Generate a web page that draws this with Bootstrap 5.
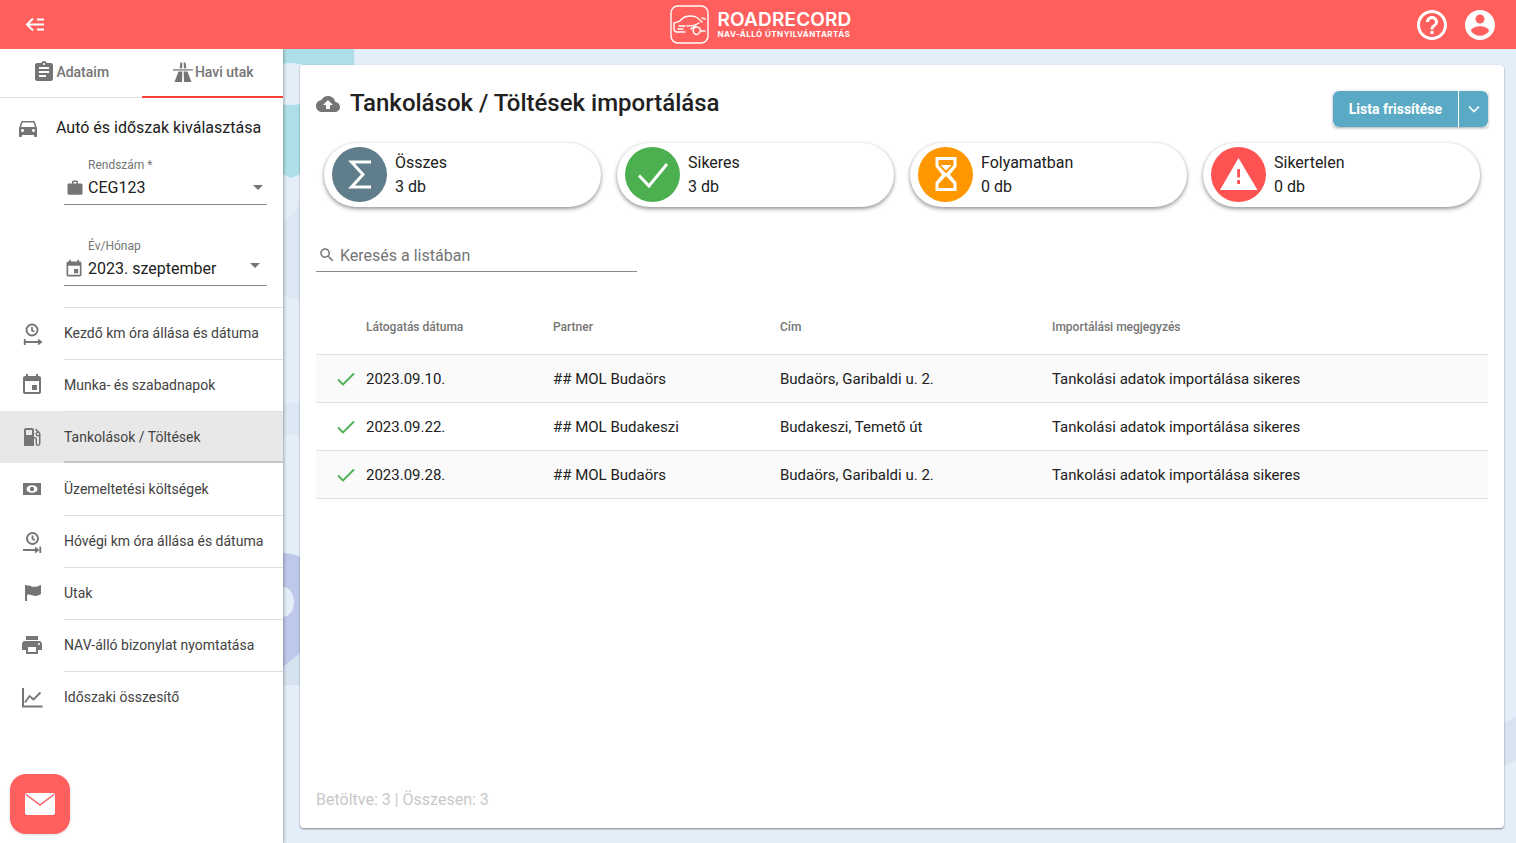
<!DOCTYPE html>
<html lang="hu">
<head>
<meta charset="utf-8">
<title>RoadRecord</title>
<link href="https://cdn.jsdelivr.net/npm/bootstrap@5.3.0/dist/css/bootstrap.min.css" rel="stylesheet">
<style>
html,body{height:100%}
body{font-family:Roboto,"Liberation Sans",sans-serif;font-size:14px;color:#212121;background:#e3eef9;overflow:hidden}
.rr-shell{height:843px}
.rr-top{height:49px;background:#ff5f5d;color:#fff;flex:none;position:relative;z-index:3}
.rr-back{left:24px;top:14px;width:21px;height:21px}
.rr-logo{gap:8px;height:49px;margin-left:4px}
.rr-brand{font-family:"Inter","Noto Sans",sans-serif;font-weight:600;font-size:19px;line-height:19px;letter-spacing:.15px}
.rr-sub{font-family:"Inter","Noto Sans",sans-serif;font-weight:700;font-size:8px;line-height:10px;letter-spacing:.46px}
.rr-top-icons{right:18px;top:0;height:49px;gap:12px}
.rr-top-icons svg{width:36px;height:36px;fill:#fff}
.rr-body{min-height:0;position:relative}
.rr-side{width:283px;flex:none;background:#fff;box-shadow:1px 0 3px rgba(0,0,0,.3);position:relative;z-index:2}
.rr-tabs{height:49px;border-bottom:1px solid #e0e0e0;flex:none}
.rr-tab{flex:1 1 50%;height:48px;color:#757575;font-weight:500;font-size:14px;gap:0;padding-bottom:2px}
.rr-tab svg{width:24px;height:24px;fill:#757575;flex:none}
.rr-tab-on{border-bottom:2px solid #f44336;height:49px;margin-bottom:-1px;padding-bottom:1px}
.rr-sec{height:60px;padding-left:16px;font-size:16px;gap:16px}
.rr-sec svg{width:24px;height:24px;fill:#757575;flex:none}
.rr-field{margin-left:64px;width:203px;border-bottom:1px solid #8a8a8a;position:relative}
.rr-f1{height:50px;margin-top:-3px;padding-top:3px}
.rr-f2{height:50px;margin-top:31px;padding-top:3px}
.rr-flabel{font-size:12px;line-height:14px;color:#757575;padding-left:24px;margin-bottom:4px}
.rr-fval{font-size:16px;line-height:24px;color:#212121;gap:4px}
.rr-fval svg{width:20px;height:20px;fill:#757575;flex:none}
.rr-f1 .rr-fval svg{width:18px;height:18px;margin-left:2px}
.rr-caret{width:0;height:0;border-left:5.5px solid transparent;border-right:5.5px solid transparent;border-top:5px solid #757575;right:4px;top:30px}
.rr-f2 .rr-caret{right:7px;top:27px}
.rr-nav{margin-top:21px}
.rr-item{height:52px;position:relative;color:#424242;font-size:14px}
.rr-ic{width:64px;flex:none}
.rr-ic svg{width:24px;height:24px;fill:#757575}
.rr-lab{flex:1;height:52px;border-top:1px solid #e0e0e0}
.rr-active{background:#e8e8e8}
.rr-active .rr-lab{border-bottom:2px solid #c4c4c4;padding-top:2px}
.rr-active + .rr-item .rr-lab{border-top:0;padding-top:1px}
.rr-fab{width:60px;height:60px;border-radius:16px;background:#ff5f5d;margin:auto 0 9px 10px;box-shadow:0 1px 3px rgba(0,0,0,.15)}
.rr-fab svg{width:30px;height:22px}
.rr-main{position:relative;padding:16px 12px 15px 17px;min-width:0}
.rr-deco{position:absolute;left:0;top:0;width:1233px;height:794px;z-index:0}
.rr-card{position:relative;z-index:1;background:#fff;border-radius:4px;box-shadow:0 1px 2px rgba(0,0,0,.45);padding:0 16px 16px}
.rr-head{height:78px;flex:none}
.rr-head-ic{width:24px;height:24px;fill:#757575;margin-right:10px}
.rr-title{font-size:24px;font-weight:500;color:#212121;margin:0;line-height:28px;position:relative;top:-1px}
.rr-group{height:36px;border-radius:4px;box-shadow:0 1px 3px rgba(0,0,0,.35);margin-top:10px}
.rr-btn{background:#5aa9c5;color:#fff;font-size:14px;font-weight:700;border:0;height:36px;padding:0 16px;--bs-btn-hover-bg:#5aa9c5;--bs-btn-hover-color:#fff}
.rr-btn-r{flex:0 0 29px;width:29px;padding:0;margin-left:1px !important}
.rr-btn-r svg{width:12px;height:8px}
.rr-pills{padding:0 8px;gap:16px;flex:none}
.rr-pill{flex:1 1 0;height:64px;border-radius:32px;background:#fff;box-shadow:0 2px 4px rgba(0,0,0,.4),0 0 3px rgba(0,0,0,.08);padding:0 8px;gap:8px;min-width:0}
.rr-disc{width:55px;height:55px;border-radius:50%;flex:none;margin-top:-1px}
.rr-disc svg{width:55px;height:55px;display:block}
.rr-ptext{font-size:16px;line-height:24px;color:#212121;margin-top:-1px}
.rr-slate{background:#607d8b}.rr-green{background:#4caf50}.rr-amber{background:#ff9800}.rr-red{background:#ff5252}
.rr-search{width:321px;height:37px;margin-top:28px;padding-top:6px;border-bottom:1px solid #8a8a8a;color:#757575;font-size:16px;flex:none}
.rr-search svg{width:18px;height:18px;fill:#757575;margin:0 4px 0 2px;position:relative;top:-1px}
.rr-table{table-layout:fixed;margin:34px 0 0;--bs-table-bg:transparent;color:#212121}
.rr-table th{font-size:12px;font-weight:500;color:#757575;height:48px;padding:0 0 6px;vertical-align:middle;border-bottom:1px solid #e0e0e0}
.rr-table td{font-size:15px;height:48px;padding:2px 0 0;vertical-align:middle;border-bottom:1px solid #e0e0e0;color:#212121;background:transparent;box-shadow:none}
.rr-table tr.rr-odd td{background:#fafafa}
.rr-c0{width:50px}.rr-c1{width:187px}.rr-c2{width:227px}.rr-c3{width:272px}
.rr-chk{width:18px;height:14px;margin-left:21px;display:block}
.rr-foot{margin-top:auto;font-size:16px;line-height:24px;color:#c8c8c8}
</style>
</head>
<body>
<div class="rr-shell d-flex flex-column">
  <header class="rr-top d-flex align-items-center justify-content-center">
    <svg class="rr-back position-absolute" viewBox="0 0 21 21" fill="none" stroke="#fff" stroke-width="2"><path d="M9 4.500 3 10.500l6 6M3 10.500h17M13 5.500h7M13 15.500h7"/></svg>
    <div class="rr-logo d-flex align-items-center">
      <svg width="41" height="41" viewBox="0 0 41 41" fill="none" stroke="#fff" stroke-width="1.400" stroke-linecap="round" stroke-linejoin="round"><path d="M9 2h23c4 0 7 3 7 7v23c0 4-3 7-7 7H9c-4 0-7-3-7-7V9c0-4 3-7 7-7z"/><path d="M5 19c3-1 5-1 7-3 2-3 5-4 10-4 5 0 7 2 11 6M33 14l3 1M5 19v6c0 2 1 3 3 3h8M10 22h6M9 25h5M18 22c5 0 9-1 12-3"/><path d="M26 30c-3-2-2-7 1-7 4 0 5 2 4 5-1 2-3 3-5 2zM22 25c3-3 4-3 5-3M32 27h4"/></svg>
      <div class="text-start">
        <div class="rr-brand">ROADRECORD</div>
        <div class="rr-sub">NAV-ÁLLÓ ÚTNYILVÁNTARTÁS</div>
      </div>
    </div>
    <div class="rr-top-icons position-absolute d-flex align-items-center">
      <svg viewBox="0 0 24 24"><path d="M11 18h2v-2h-2v2zm1-16C6.480 2 2 6.480 2 12s4.480 10 10 10 10-4.480 10-10S17.520 2 12 2zm0 18c-4.410 0-8-3.590-8-8s3.590-8 8-8 8 3.590 8 8-3.590 8-8 8zm0-14c-2.210 0-4 1.790-4 4h2c0-1.100.9-2 2-2s2 .9 2 2c0 2-3 1.750-3 5h2c0-2.250 3-2.500 3-5 0-2.210-1.790-4-4-4z"/></svg>
      <svg viewBox="0 0 24 24"><path d="M12 2C6.480 2 2 6.480 2 12s4.480 10 10 10 10-4.480 10-10S17.520 2 12 2zm0 3c1.660 0 3 1.340 3 3s-1.340 3-3 3-3-1.340-3-3 1.340-3 3-3zm0 14.200c-2.500 0-4.710-1.280-6-3.220.03-1.990 4-3.080 6-3.080 1.990 0 5.970 1.090 6 3.080-1.290 1.940-3.500 3.220-6 3.220z"/></svg>
    </div>
  </header>

  <div class="rr-body d-flex flex-grow-1">
    <aside class="rr-side d-flex flex-column">
      <div class="rr-tabs d-flex">
        <div class="rr-tab d-flex align-items-center justify-content-center">
          <svg viewBox="0 0 24 24"><path d="M19 3h-4.180C14.400 1.840 13.300 1 12 1c-1.300 0-2.400.84-2.820 2H5c-1.100 0-2 .9-2 2v14c0 1.100.9 2 2 2h14c1.100 0 2-.9 2-2V5c0-1.100-.9-2-2-2zm-7 0c.55 0 1 .45 1 1s-.45 1-1 1-1-.45-1-1 .45-1 1-1zm2 14H7v-2h7v2zm3-4H7v-2h10v2zm0-4H7V7h10v2z"/></svg>
          <span>Adataim</span>
        </div>
        <div class="rr-tab rr-tab-on d-flex align-items-center justify-content-center">
          <svg viewBox="0 0 24 24"><path d="M2 9.200h20v1.300H2zM9.500 2.500h1.800l-.2 5.800H8.600zM12.700 2.500h1.800l.9 5.800h-2.500zM7.500 11.500h3.800L11 22H3.500zM12.700 11.500h3.800l4 10.500H13z"/></svg>
          <span>Havi utak</span>
        </div>
      </div>
      <div class="rr-sec d-flex align-items-center">
        <svg viewBox="0 0 24 24"><path d="M18.920 6.010C18.720 5.420 18.160 5 17.500 5h-11c-.66 0-1.210.42-1.420 1.010L3 12v8c0 .55.45 1 1 1h1c.55 0 1-.45 1-1v-1h12v1c0 .55.45 1 1 1h1c.55 0 1-.45 1-1v-8l-2.080-5.990zM6.500 16c-.83 0-1.500-.67-1.500-1.500S5.670 13 6.500 13s1.500.67 1.500 1.500S7.330 16 6.500 16zm11 0c-.83 0-1.500-.67-1.500-1.500s.67-1.500 1.500-1.500 1.500.67 1.500 1.500-.67 1.500-1.500 1.500zM5 11l1.500-4.500h11L19 11H5z"/></svg>
        <span>Autó és időszak kiválasztása</span>
      </div>
      <div class="rr-field rr-f1">
        <div class="rr-flabel">Rendszám *</div>
        <div class="rr-fval d-flex align-items-center">
          <svg viewBox="0 0 24 24"><path d="M20 6h-4V4c0-1.110-.89-2-2-2h-4c-1.110 0-2 .89-2 2v2H4c-1.110 0-1.990.89-1.990 2L2 19c0 1.110.89 2 2 2h16c1.110 0 2-.89 2-2V8c0-1.110-.89-2-2-2zm-6 0h-4V4h4v2z"/></svg>
          <span>CEG123</span>
        </div>
        <span class="rr-caret position-absolute"></span>
      </div>
      <div class="rr-field rr-f2">
        <div class="rr-flabel">Év/Hónap</div>
        <div class="rr-fval d-flex align-items-center">
          <svg viewBox="0 0 24 24"><path d="M17 12h-5v5h5v-5zM16 1v2H8V1H6v2H5c-1.110 0-1.990.9-1.990 2L3 19c0 1.100.89 2 2 2h14c1.100 0 2-.9 2-2V5c0-1.100-.9-2-2-2h-1V1h-2zm3 18H5V8h14v11z"/></svg>
          <span>2023. szeptember</span>
        </div>
        <span class="rr-caret position-absolute"></span>
      </div>
      <nav class="rr-nav">
        <div class="rr-item d-flex">
          <div class="rr-ic d-flex align-items-center justify-content-center"><svg viewBox="0 0 24 24" fill="none"><circle cx="12" cy="9" r="5.500" fill="none" stroke="#757575" stroke-width="1.900"/><path d="M12 6v3.300l2.300 1.400M4.700 21H19M4.700 18v6" fill="none" stroke="#757575" stroke-width="1.800"/><path d="M18 17.500 22.500 21 18 24.500z"/></svg></div>
          <div class="rr-lab d-flex align-items-center">Kezdő km óra állása és dátuma</div>
        </div>
        <div class="rr-item d-flex">
          <div class="rr-ic d-flex align-items-center justify-content-center"><svg viewBox="0 0 24 24"><path d="M17 12h-5v5h5v-5zM16 1v2H8V1H6v2H5c-1.110 0-1.990.9-1.990 2L3 19c0 1.100.89 2 2 2h14c1.100 0 2-.9 2-2V5c0-1.100-.9-2-2-2h-1V1h-2zm3 18H5V8h14v11z"/></svg></div>
          <div class="rr-lab d-flex align-items-center">Munka- és szabadnapok</div>
        </div>
        <div class="rr-item rr-active d-flex">
          <div class="rr-ic d-flex align-items-center justify-content-center"><svg viewBox="0 0 24 24"><path d="M19.770 7.230l.01-.01-3.720-3.720L15 4.560l2.110 2.110c-.94.36-1.610 1.260-1.610 2.330 0 1.380 1.120 2.500 2.500 2.500.36 0 .69-.08 1-.21v7.210c0 .55-.45 1-1 1s-1-.45-1-1V14c0-1.100-.9-2-2-2h-1V5c0-1.100-.9-2-2-2H6c-1.100 0-2 .9-2 2v16h10v-7.500h1.500v5c0 1.380 1.120 2.500 2.500 2.500s2.500-1.120 2.500-2.500V9c0-.69-.28-1.320-.73-1.770zM12 10H6V5h6v5zm6 0c-.55 0-1-.45-1-1s.45-1 1-1 1 .45 1 1-.45 1-1 1z"/></svg></div>
          <div class="rr-lab d-flex align-items-center">Tankolások / Töltések</div>
        </div>
        <div class="rr-item d-flex">
          <div class="rr-ic d-flex align-items-center justify-content-center"><svg viewBox="0 0 24 24"><rect x="3" y="6" width="18" height="12"/><ellipse cx="12" cy="12" rx="5.500" ry="3.800" fill="#fff"/><circle cx="12" cy="12" r="2.200"/></svg></div>
          <div class="rr-lab d-flex align-items-center">Üzemeltetési költségek</div>
        </div>
        <div class="rr-item d-flex">
          <div class="rr-ic d-flex align-items-center justify-content-center"><svg viewBox="0 0 24 24" fill="none"><circle cx="12.500" cy="9.500" r="5.500" fill="none" stroke="#757575" stroke-width="1.900"/><path d="M12.500 6.500v3.300l2.300 1.400M3 21H17M20.300 17.500v7" fill="none" stroke="#757575" stroke-width="1.800"/><path d="M15 17.500 19.500 21 15 24.500z"/></svg></div>
          <div class="rr-lab d-flex align-items-center">Hóvégi km óra állása és dátuma</div>
        </div>
        <div class="rr-item d-flex">
          <div class="rr-ic d-flex align-items-center justify-content-center"><svg viewBox="0 0 24 24"><path d="M5 4h2v.800c2.500-1.300 4.500 1 7 1 2.500.2 4.500-1 7-1.800v9c-2.500 1.500-4.500 2.200-7 1.800-2.500-.5-4.500-2-7-.9V20H5z"/></svg></div>
          <div class="rr-lab d-flex align-items-center">Utak</div>
        </div>
        <div class="rr-item d-flex">
          <div class="rr-ic d-flex align-items-center justify-content-center"><svg viewBox="0 0 24 24"><path d="M19 8H5c-1.660 0-3 1.340-3 3v6h4v4h12v-4h4v-6c0-1.660-1.340-3-3-3zm-3 11H8v-5h8v5zm3-7c-.55 0-1-.45-1-1s.45-1 1-1 1 .45 1 1-.45 1-1 1zm-1-9H6v4h12V3z"/></svg></div>
          <div class="rr-lab d-flex align-items-center">NAV-álló bizonylat nyomtatása</div>
        </div>
        <div class="rr-item d-flex">
          <div class="rr-ic d-flex align-items-center justify-content-center"><svg viewBox="0 0 24 24" fill="none"><path d="M3 3v18.500h19.500" stroke="#757575" stroke-width="2" fill="none"/><path d="M5 17.500 9.500 11l4 3.500 7-7" stroke="#757575" stroke-width="1.800" fill="none"/></svg></div>
          <div class="rr-lab d-flex align-items-center">Időszaki összesítő</div>
        </div>
      </nav>
      <div class="rr-fab d-flex align-items-center justify-content-center">
        <svg viewBox="0 0 30 22"><path d="M2 0h26c1 0 2 1 2 2v18c0 1-1 2-2 2H2c-1 0-2-1-2-2V2C0 1 1 0 2 0z" fill="#fff"/><path d="M1 1.500 15 12 29 1.500" fill="none" stroke="#ff5f5d" stroke-width="1.500"/></svg>
      </div>
    </aside>

    <main class="rr-main flex-grow-1 d-flex flex-column">
      <svg class="rr-deco" viewBox="283 49 1233 794">
        <path d="M283 49H354C356 100 340 160 291 178L283 174z" fill="#aedfe8"/>
        <ellipse cx="291" cy="84" rx="28" ry="21" fill="#e3eef9"/>
        <path d="M283 222 300 205V300L283 296z" fill="#dbe7f2"/>
        <rect x="283" y="403" width="17" height="32" fill="#dce8f3"/>
        <path d="M283 553C292 553 300 556 304 560V650L283 667z" fill="#bec8ea"/>
        <path d="M283 667 304 650V685H283z" fill="#d5e3ef"/>
        <ellipse cx="283" cy="602" rx="11" ry="15" fill="#e3eef9"/>
        <path d="M1504 724 1516 716V760L1504 766z" fill="#d7e4f0"/>
      </svg>
      <section class="rr-card flex-grow-1 d-flex flex-column">
        <div class="rr-head d-flex align-items-center justify-content-between">
          <div class="d-flex align-items-center">
            <svg class="rr-head-ic" viewBox="0 0 24 24"><path d="M19.350 10.040C18.670 6.590 15.640 4 12 4 9.110 4 6.600 5.640 5.350 8.040 2.340 8.360 0 10.910 0 14c0 3.310 2.690 6 6 6h13c2.760 0 5-2.240 5-5 0-2.640-2.050-4.780-4.650-4.960zM14 13v4h-4v-4H7l5-5 5 5h-3z"/></svg>
            <h1 class="rr-title">Tankolások / Töltések importálása</h1>
          </div>
          <div class="btn-group rr-group">
            <button type="button" class="btn rr-btn">Lista frissítése</button>
            <button type="button" class="btn rr-btn rr-btn-r d-flex align-items-center justify-content-center"><svg viewBox="0 0 12 8" fill="none" stroke="#fff" stroke-width="1.600"><path d="M1 1.500 6 6.500 11 1.500"/></svg></button>
          </div>
        </div>

        <div class="rr-pills d-flex">
          <div class="rr-pill d-flex align-items-center">
            <div class="rr-disc rr-slate"><svg viewBox="0 0 55 55" fill="none" stroke="#fff" stroke-width="3"><path d="M39 15H19.500L31 27.500 19.500 40H39"/></svg></div>
            <div class="rr-ptext"><div>Összes</div><div>3 db</div></div>
          </div>
          <div class="rr-pill d-flex align-items-center">
            <div class="rr-disc rr-green"><svg viewBox="0 0 55 55" fill="none" stroke="#fff" stroke-width="3"><path d="M14 28.500 24 39 42 17"/></svg></div>
            <div class="rr-ptext"><div>Sikeres</div><div>3 db</div></div>
          </div>
          <div class="rr-pill d-flex align-items-center">
            <div class="rr-disc rr-amber"><svg viewBox="0 0 55 55"><path fill="#fff" fill-rule="evenodd" d="M17.500 10H38.500V19.500L32 27.500 38.500 35.500V44H17.500V35.500L24 27.500 17.500 19.500zM20.500 13V18.500L28 26.500 35.500 18.500V13zM28 29 20.500 37V41H35.500V37z"/><path fill="#fff" d="M22.500 18H33.500L28 23.500z"/></svg></div>
            <div class="rr-ptext"><div>Folyamatban</div><div>0 db</div></div>
          </div>
          <div class="rr-pill d-flex align-items-center">
            <div class="rr-disc rr-red"><svg viewBox="0 0 55 55"><path fill="#fff" fill-rule="evenodd" d="M9 43 27.500 11 46.500 43zM26.200 22V30.500H29V22zM26.200 33V37H29V33z"/></svg></div>
            <div class="rr-ptext"><div>Sikertelen</div><div>0 db</div></div>
          </div>
        </div>

        <div class="rr-search d-flex align-items-center">
          <svg viewBox="0 0 24 24"><path d="M15.500 14h-.79l-.28-.27C15.410 12.590 16 11.110 16 9.500 16 5.910 13.090 3 9.500 3S3 5.910 3 9.500 5.910 16 9.500 16c1.610 0 3.090-.59 4.230-1.570l.27.28v.79l5 4.990L20.490 19l-4.990-5zm-6 0C7.010 14 5 11.990 5 9.500S7.010 5 9.500 5 14 7.010 14 9.500 11.990 14 9.500 14z"/></svg>
          <span>Keresés a listában</span>
        </div>

        <table class="table rr-table">
          <colgroup><col class="rr-c0"><col class="rr-c1"><col class="rr-c2"><col class="rr-c3"><col></colgroup>
          <thead>
            <tr><th></th><th>Látogatás dátuma</th><th>Partner</th><th>Cím</th><th>Importálási megjegyzés</th></tr>
          </thead>
          <tbody>
            <tr class="rr-odd"><td><svg class="rr-chk" viewBox="0 0 18 14" fill="none" stroke="#4caf50" stroke-width="1.800"><path d="M1 7.500 6 12.500 17 1.500"/></svg></td><td>2023.09.10.</td><td>## MOL Budaörs</td><td>Budaörs, Garibaldi u. 2.</td><td>Tankolási adatok importálása sikeres</td></tr>
            <tr><td><svg class="rr-chk" viewBox="0 0 18 14" fill="none" stroke="#4caf50" stroke-width="1.800"><path d="M1 7.500 6 12.500 17 1.500"/></svg></td><td>2023.09.22.</td><td>## MOL Budakeszi</td><td>Budakeszi, Temető út</td><td>Tankolási adatok importálása sikeres</td></tr>
            <tr class="rr-odd"><td><svg class="rr-chk" viewBox="0 0 18 14" fill="none" stroke="#4caf50" stroke-width="1.800"><path d="M1 7.500 6 12.500 17 1.500"/></svg></td><td>2023.09.28.</td><td>## MOL Budaörs</td><td>Budaörs, Garibaldi u. 2.</td><td>Tankolási adatok importálása sikeres</td></tr>
          </tbody>
        </table>
        <div class="rr-foot">Betöltve: 3 | Összesen: 3</div>
      </section>
    </main>
  </div>
</div>
<script src="https://cdn.jsdelivr.net/npm/bootstrap@5.3.0/dist/js/bootstrap.bundle.min.js"></script>
</body>
</html>
